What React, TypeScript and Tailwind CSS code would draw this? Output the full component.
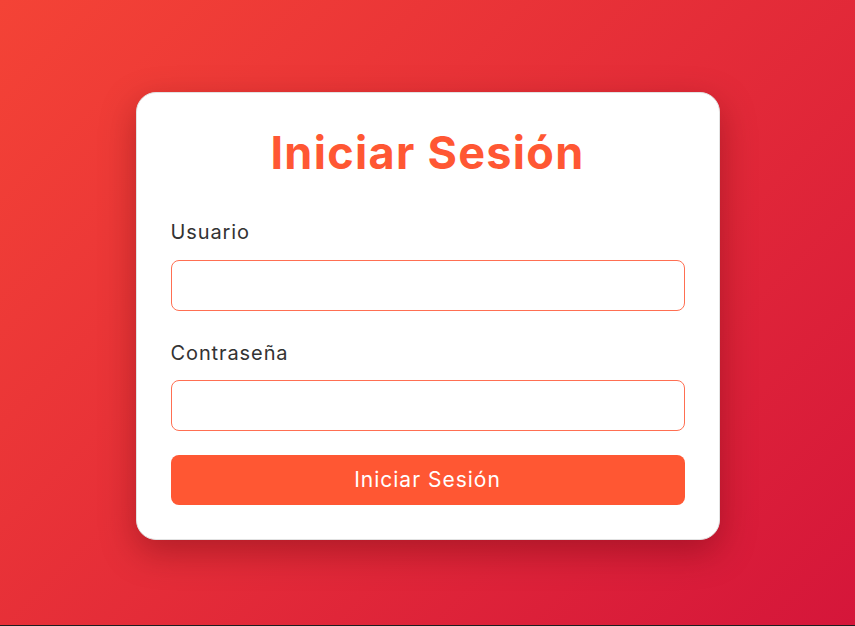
export default function App() {
  return (
    <div className="w-[855px] h-[626px] flex flex-col" style={{ fontFamily: 'Inter, "Noto Sans", sans-serif' }}>
      <div className="h-[625px] w-full flex items-center justify-center bg-[linear-gradient(135deg,#f44336_0%,#d5163a_100%)]">
        <div className="w-[584px] h-[448px] mt-[7px] bg-white rounded-[20px] border border-[#e2e2e2] shadow-[0_12px_35px_rgba(80,0,10,0.35)] p-[34px] flex flex-col">
          <h1 className="h-[52px] text-[45px] leading-[52px] font-bold text-center text-[#ff5733] tracking-[1.3px]">Iniciar Sesión</h1>
          <label className="mt-[39px] text-[20px] leading-[28px] text-[#333333] tracking-[0.9px]">Usuario</label>
          <input className="mt-[14px] h-[51px] w-full rounded-[8px] border border-[#ff6f52] outline-none px-3" />
          <label className="mt-[28px] text-[20px] leading-[28px] text-[#333333] tracking-[0.9px]">Contraseña</label>
          <input type="password" className="mt-[13px] h-[51px] w-full rounded-[8px] border border-[#ff6f52] outline-none px-3" />
          <button className="mt-[24px] h-[50px] w-full rounded-[8px] bg-[#ff5733] text-white text-[21px] tracking-[1px]">Iniciar Sesión</button>
        </div>
      </div>
      <div className="h-[1px] bg-[#1e1e1e]" />
    </div>
  );
}
